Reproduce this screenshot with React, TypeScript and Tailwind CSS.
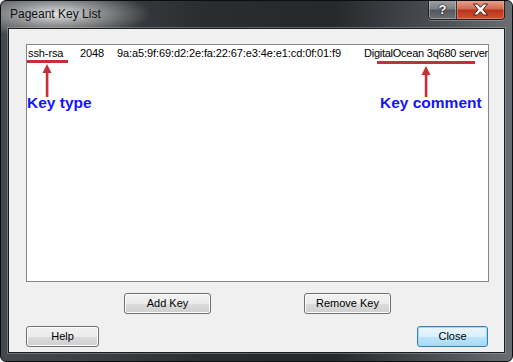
import React from "react";

const btn =
  "h-[21px] rounded-[3px] border border-[#707070] bg-[linear-gradient(180deg,#f2f2f2_0%,#ebebeb_50%,#dddddd_50%,#cfcfcf_100%)] shadow-[inset_0_0_0_1px_#fbfbfb] text-[11px] text-black flex items-center justify-center";

function Arrow({ h }: { h: number }) {
  return (
    <svg width="10" height={h} viewBox={`0 0 10 ${h}`}>
      <polygon points="5,0 9.5,9 0.5,9" fill="#c62f37" />
      <rect x="3.8" y="8" width="2.6" height={h - 8} fill="#c62f37" />
    </svg>
  );
}

export default function App() {
  return (
    <div className="w-[513px] h-[362px] bg-white font-['Liberation_Sans',sans-serif]">
      <div className="w-[513px] h-[362px] rounded-[6px] border border-[#0c0d0e] flex flex-col px-[7px] pb-[8px] overflow-hidden bg-[radial-gradient(ellipse_95px_24px_at_55px_13px,rgba(235,235,235,0.95)_0%,rgba(200,200,200,0.6)_45%,rgba(120,120,120,0)_100%),linear-gradient(90deg,#45494d_0%,#3a3e42_20%,#2a2d30_40%,#26292c_65%,#4a4e52_85%,#6a6e72_100%)]">
        {/* Title bar */}
        <div className="h-[27px] flex items-start shrink-0">
          <span className="ml-[2px] mt-[6px] text-[12px] leading-[14px] text-[#101010]">
            Pageant Key List
          </span>
          <div className="ml-auto -mt-[1px] flex h-[20px] rounded-b-[4px] border border-[#222] border-t-0 overflow-hidden shadow-[0_1px_0_rgba(255,255,255,0.25)]">
            <div className="w-[28px] h-full flex items-center justify-center border-r border-[#333] bg-[linear-gradient(180deg,#9ea2a6_0%,#7d8185_45%,#55595d_55%,#6c7074_100%)] shadow-[inset_0_0_0_1px_rgba(255,255,255,0.3)]">
              <span className="text-white font-bold text-[13px] leading-none [text-shadow:0_0_1px_#000,0_0_2px_#000]">?</span>
            </div>
            <div className="w-[47px] h-full flex items-center justify-center bg-[linear-gradient(180deg,#e7a797_0%,#d46a52_45%,#b9351a_55%,#cf5434_100%)] shadow-[inset_0_0_0_1px_rgba(255,200,180,0.35)]">
              <svg width="17" height="13" viewBox="0 0 17 13">
                <path
                  d="M1.5 1 L5.5 1 L8.5 4.3 L11.5 1 L15.5 1 L11 6.5 L15.5 12 L11.5 12 L8.5 8.7 L5.5 12 L1.5 12 L6 6.5 Z"
                  fill="#ffffff"
                  stroke="#4a1a10"
                  strokeWidth="1"
                  strokeLinejoin="round"
                />
              </svg>
            </div>
          </div>
        </div>

        {/* Client area */}
        <div className="flex-1 flex flex-col bg-[#f0f0f0] border border-[#1a1c1e] shadow-[0_0_0_1px_rgba(200,200,200,0.35)]">
          <div className="relative mt-[15px] ml-[17px] mr-[15px] h-[238px] border border-[#828790] bg-white overflow-hidden">
            <div className="flex pt-[2px] pl-[1px] text-[11px] leading-[13px] text-black whitespace-nowrap tracking-[-0.1px]">
              <span className="w-[52px] shrink-0">ssh-rsa</span>
              <span className="w-[37px] shrink-0">2048</span>
              <span className="w-[247px] shrink-0">9a:a5:9f:69:d2:2e:fa:22:67:e3:4e:e1:cd:0f:01:f9</span>
              <span className="shrink-0 tracking-[-0.25px]">DigitalOcean 3q680 server</span>
            </div>

            {/* annotations */}
            <div className="absolute left-0 top-[15px] w-[41px] h-[3px] bg-[#c62f37]" />
            <div className="absolute left-[15px] top-[19px] flex">
              <Arrow h={33} />
            </div>
            <div className="absolute left-0 top-[49px] text-[15.5px] leading-[18px] font-bold text-[#1414ff]">
              Key type
            </div>

            <div className="absolute left-[350px] top-[16px] w-[98px] h-[3px] bg-[#c62f37]" />
            <div className="absolute left-[394px] top-[21px] flex">
              <Arrow h={31} />
            </div>
            <div className="absolute left-[353px] top-[49px] text-[15.5px] leading-[18px] font-bold text-[#1414ff]">
              Key comment
            </div>
          </div>

          <div className="flex mt-[11px]">
            <button className={`${btn} w-[87px] ml-[115px]`}>Add Key</button>
            <button className={`${btn} w-[87px] ml-[93px]`}>Remove Key</button>
          </div>

          <div className="flex mt-[12px]">
            <button className={`${btn} w-[73px] ml-[17px]`}>Help</button>
            <button className="h-[21px] w-[71px] ml-auto mr-[16px] rounded-[3px] border border-[#3c7fb1] bg-[linear-gradient(180deg,#eaf6fd_0%,#d9f0fc_50%,#bee6fd_50%,#a7d9f5_100%)] shadow-[inset_0_0_0_1px_#9fdcf7] text-[11px] text-black flex items-center justify-center">
              Close
            </button>
          </div>
        </div>
      </div>
    </div>
  );
}
